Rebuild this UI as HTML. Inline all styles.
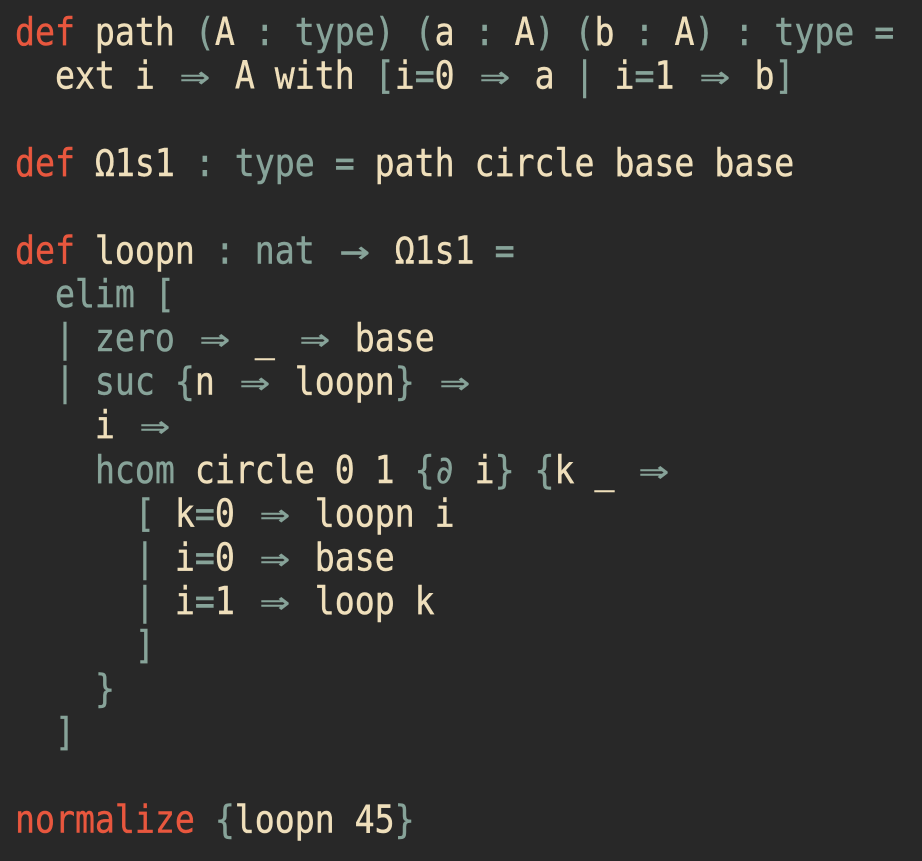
<!DOCTYPE html>
<html><head><meta charset="utf-8"><style>
html,body{margin:0;padding:0;background:#282828;width:922px;height:861px;overflow:hidden}
pre{margin:0;padding:8.6px 0 0 15px;font-family:"DejaVu Sans Mono","Liberation Mono",monospace;font-size:33.2px;line-height:38.09px;color:#efdfbb;transform:scaleY(1.15);transform-origin:0 0;-webkit-text-stroke:0.4px currentColor}
.r{color:#e8573e}.g{color:#87a399}
.a{display:inline-block;width:40px;text-align:center;transform:scaleX(1.5);color:#87a399}
</style></head><body><pre><span class="r">def</span> path <span class="g">(</span>A <span class="g">: type)</span> <span class="g">(</span>a <span class="g">:</span> A<span class="g">)</span> <span class="g">(</span>b <span class="g">:</span> A<span class="g">) : type =</span>
  ext i <span class="a">⇒</span> A with <span class="g">[</span>i<span class="g">=</span>0 <span class="a">⇒</span> a <span class="g">|</span> i<span class="g">=</span>1 <span class="a">⇒</span> b<span class="g">]</span>

<span class="r">def</span> Ω1s1 <span class="g">: type =</span> path circle base base

<span class="r">def</span> loopn <span class="g">: nat</span> <span class="a">→</span> Ω1s1 <span class="g">=</span>
  <span class="g">elim [</span>
  <span class="g">| zero</span> <span class="a">⇒</span> _ <span class="a">⇒</span> base
  <span class="g">| suc {</span>n <span class="a">⇒</span> loopn<span class="g">}</span> <span class="a">⇒</span>
    i <span class="a">⇒</span>
    <span class="g">hcom</span> circle 0 1 <span class="g">{∂</span> i<span class="g">} {</span>k _ <span class="a">⇒</span>
      <span class="g">[</span> k<span class="g">=</span>0 <span class="a">⇒</span> loopn i
      <span class="g">|</span> i<span class="g">=</span>0 <span class="a">⇒</span> base
      <span class="g">|</span> i<span class="g">=</span>1 <span class="a">⇒</span> loop k
      <span class="g">]</span>
    <span class="g">}</span>
  <span class="g">]</span>

<span class="r">normalize</span> <span class="g">{</span>loopn 45<span class="g">}</span>
</pre></body></html>
